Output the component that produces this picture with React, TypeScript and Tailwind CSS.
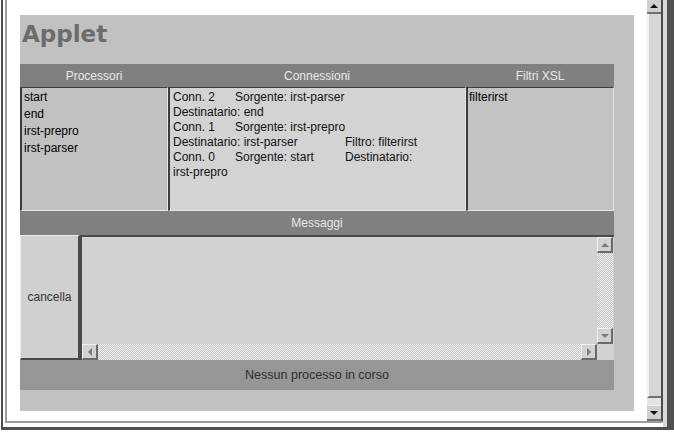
import React from 'react'

// Small triangle used on scroll buttons
function Arrow({ dir, color = '#7a7a7a' }: { dir: 'up' | 'down' | 'left' | 'right'; color?: string }) {
    const pts = {
        up: '0,5 4,1 8,5',
        down: '0,1 4,5 8,1',
        left: '5,0 1,4 5,8',
        right: '1,0 5,4 1,8',
    }[dir]
    const vertical = dir === 'up' || dir === 'down'
    return (
        <svg width={vertical ? 8 : 6} height={vertical ? 6 : 8} viewBox={vertical ? '0 0 8 6' : '0 0 6 8'}>
            <polygon points={pts} fill={color} />
        </svg>
    )
}

function ScrollButton({ dir }: { dir: 'up' | 'down' | 'left' | 'right' }) {
    return (
        <div className="w-[16px] h-[16px] shrink-0 flex items-center justify-center bg-[#d2d2d2] border-t border-l border-t-[#f0f0f0] border-l-[#f0f0f0] border-r-2 border-b-2 border-r-[#6a6a6a] border-b-[#6a6a6a]">
            <Arrow dir={dir} />
        </div>
    )
}

const checker = 'bg-[repeating-conic-gradient(#c6c6c6_0%_25%,#ededed_0%_50%)] bg-[length:2px_2px]'

const processori = ['start', 'end', 'irst-prepro', 'irst-parser']

const panel =
    'border-l-2 border-t border-r border-b border-l-[#3c3c3c] border-t-[#3c3c3c] border-r-[#e4e4e4] border-b-[#e4e4e4]'

export default function App() {
    return (
        <div className="w-[674px] h-[438px] bg-white pl-px font-['Liberation_Sans',Arial,sans-serif] text-[12px] text-black overflow-hidden">
            <div className="h-[430px] flex bg-white border-l-2 border-b-[3px] border-r-[7px] border-[#505050]">
                <div className="ml-[2px] flex-1 flex mb-[4px] border-l-2 border-b-2 border-[#9c9c9c]">
                    {/* page body */}
                    <div className="flex-1 pl-[13px] pt-[15px]">
                        <div className="w-[614px] h-[396px] bg-[#c1c1c1]">
                            <div className="w-[594px]">
                                <div className="h-[49px] pt-[8px] pl-[2px] font-['DejaVu_Sans',Verdana,sans-serif] font-bold text-[23px] leading-[23px] text-[#6c6c6c]">
                                    Applet
                                </div>

                                {/* column titles */}
                                <div className="h-[23px] grid grid-cols-[148px_298px_148px] bg-[#808080] text-[#e8e8e8]">
                                    <div className="flex items-center justify-center">Processori</div>
                                    <div className="flex items-center justify-center">Connessioni</div>
                                    <div className="flex items-center justify-center">Filtri XSL</div>
                                </div>

                                {/* lists */}
                                <div className="h-[124px] grid grid-cols-[148px_298px_148px]">
                                    <div className={`${panel} bg-[#c1c1c1] pl-[2px] pt-px leading-[17px]`}>
                                        {processori.map((p) => (
                                            <div key={p}>{p}</div>
                                        ))}
                                    </div>
                                    <div className={`${panel} bg-[#d3d3d3] pl-[3px] pt-[2px] leading-[15px] text-[#111]`}>
                                        <div className="flex">
                                            <span className="w-[62px]">Conn. 2</span>
                                            <span>Sorgente: irst-parser</span>
                                        </div>
                                        <div>Destinatario: end</div>
                                        <div className="flex">
                                            <span className="w-[62px]">Conn. 1</span>
                                            <span>Sorgente: irst-prepro</span>
                                        </div>
                                        <div className="flex">
                                            <span className="w-[172px]">Destinatario: irst-parser</span>
                                            <span>Filtro: filterirst</span>
                                        </div>
                                        <div className="flex">
                                            <span className="w-[62px]">Conn. 0</span>
                                            <span className="w-[110px]">Sorgente: start</span>
                                            <span>Destinatario:</span>
                                        </div>
                                        <div>irst-prepro</div>
                                    </div>
                                    <div className={`${panel} bg-[#c3c3c3] pl-px pt-px leading-[17px]`}>
                                        <div>filterirst</div>
                                    </div>
                                </div>

                                <div className="h-[24px] flex items-center justify-center bg-[#808080] text-[#e8e8e8]">
                                    Messaggi
                                </div>

                                {/* message area */}
                                <div className="h-[125px] flex">
                                    <button className="w-[60px] h-full bg-[#d0d0d0] text-[#333] border-t border-l border-t-[#ececec] border-l-[#ececec] border-r-2 border-b-2 border-r-[#4a4a4a] border-b-[#4a4a4a]">
                                        cancella
                                    </button>
                                    <div className="flex-1 flex flex-col bg-[#d2d2d2] border-t-2 border-l-2 border-[#4a4a4a] pr-px">
                                        <div className="flex-1 flex">
                                            <div className="flex-1" />
                                            <div className="w-[16px] flex flex-col">
                                                <ScrollButton dir="up" />
                                                <div className={`flex-1 ${checker}`} />
                                                <ScrollButton dir="down" />
                                            </div>
                                        </div>
                                        <div className="h-[16px] flex">
                                            <ScrollButton dir="left" />
                                            <div className={`flex-1 ${checker}`} />
                                            <ScrollButton dir="right" />
                                            <div className="w-[16px]" />
                                        </div>
                                    </div>
                                </div>

                                <div className="h-[30px] flex items-center justify-center bg-[#969696] text-[#2e2e2e] text-[12.5px]">
                                    Nessun processo in corso
                                </div>
                            </div>
                        </div>
                    </div>

                    {/* page scrollbar */}
                    <div className="w-[16px] flex flex-col border-r-2 border-[#4a4a4a] bg-[#dcdcdc]">
                        <div className="h-[14px] flex items-center justify-center bg-[#d0d0d0] border-b-2 border-[#707070]">
                            <Arrow dir="up" color="#111" />
                        </div>
                        <div className="flex-1 bg-[#d6d6d6] border-l-2 border-l-[#f2f2f2] border-b-2 border-b-[#707070]" />
                        <div className="h-[7px] bg-[#e4e4e4]" />
                        <div className="h-[16px] flex items-center justify-center bg-[#d0d0d0] border-t border-t-[#f0f0f0] border-b-2 border-b-[#707070]">
                            <Arrow dir="down" color="#111" />
                        </div>
                    </div>
                </div>
                <div className="w-[4px] bg-[#d8d8d8]" />
            </div>
        </div>
    )
}
